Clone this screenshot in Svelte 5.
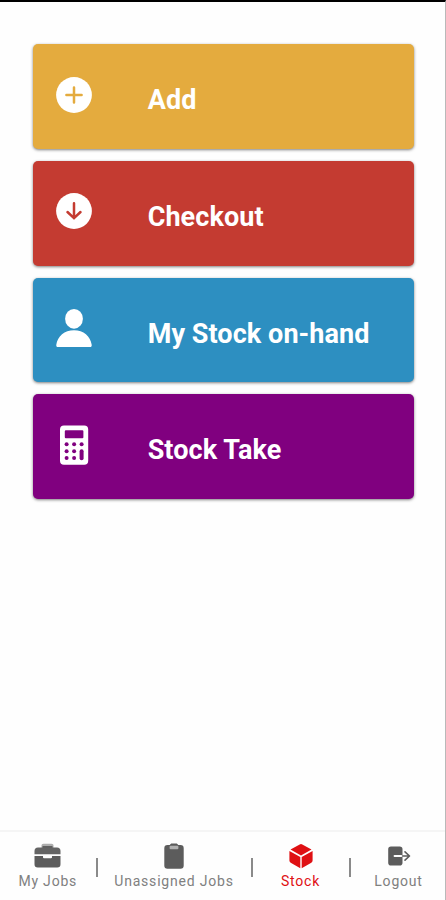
<script>
  const actions = [
    { label: 'Add', icon: 'add', color: '#e4ab3e' },
    { label: 'Checkout', icon: 'down', color: '#c43b31' },
    { label: 'My Stock on-hand', icon: 'person', color: '#2d8fc1' },
    { label: 'Stock Take', icon: 'calculator', color: '#80007f' }
  ];
  const tabs = [
    { label: 'My Jobs', icon: 'briefcase' },
    { label: 'Unassigned Jobs', icon: 'clipboard' },
    { label: 'Stock', icon: 'cube', active: true },
    { label: 'Logout', icon: 'logout' }
  ];
</script>

<div class="screen">
  <main>
    {#each actions as action}
      <button class="card" style="--tone: {action.color}">
        <svg class="card-icon" viewBox="0 0 36 36" width="36" height="36" fill="#fff">
          {#if action.icon === 'add'}
            <circle cx="18" cy="18" r="17.9" />
            <path d="M18 10.4v15.2M10.4 18h15.2" class="mark" />
          {:else if action.icon === 'down'}
            <circle cx="18" cy="18" r="17.9" />
            <path d="M18 10.200v15M11.500 19l6.500 6.200 6.500-6.200" class="mark" />
          {:else if action.icon === 'person'}
            <ellipse cx="18" cy="8.8" rx="8.9" ry="9.900" />
            <path d="M2 38.3C.7 38.3.1 37.400.3 36 1.500 27.500 8.500 21.500 18 21.500s16.500 6 17.700 14.500c.2 1.400-.4 2.300-1.700 2.300Z" transform="translate(0 -1.200)" />
          {:else}
            <path fill-rule="evenodd" d="M8-1.500h20.200a4 4 0 0 1 4 4v31.300a4 4 0 0 1-4 4H8a4 4 0 0 1-4-4V2.500a4 4 0 0 1 4-4ZM9.800 3.300a1 1 0 0 0-1 1v6a1 1 0 0 0 1 1h16.600a1 1 0 0 0 1-1v-6a1 1 0 0 0-1-1Z" />
            <g fill="var(--tone)">
              <circle cx="10.600" cy="17.300" r="2" /><circle cx="18.100" cy="17.300" r="2" /><circle cx="25.600" cy="17.300" r="2" />
              <circle cx="10.600" cy="24.200" r="2" /><circle cx="18.100" cy="24.200" r="2" />
              <circle cx="10.600" cy="31.100" r="2" /><circle cx="18.100" cy="31.100" r="2" />
              <rect x="23.600" y="22.200" width="4" height="11" rx="2" />
            </g>
          {/if}
        </svg>
        <span class="card-label">{action.label}</span>
      </button>
    {/each}
  </main>

  <nav>
    {#each tabs as tab, i}
      {#if i > 0}<i class="separator"></i>{/if}
      <a class="tab" class:active={tab.active} href="#{tab.icon}">
        <svg viewBox="0 0 28 28" width="28" height="28" fill="currentColor">
          {#if tab.icon === 'briefcase'}
            <path d="M7.500 6V3.800c0-1.300.7-2 2-2h8c1.300 0 2 .7 2 2V6Z" opacity=".5" />
            <path d="M4 5.500h4.500V4h10v1.500H23a3.500 3.500 0 0 1 3.500 3.500v3.200H.5V9A3.500 3.500 0 0 1 4 5.500Z" opacity=".95" />
            <path d="M.5 14H9v1.200a1 1 0 0 0 1 1h7a1 1 0 0 0 1-1V14h8.500v8.300a3.300 3.300 0 0 1-3.300 3.300H3.800A3.300 3.300 0 0 1 .5 22.300Z" />
          {:else if tab.icon === 'clipboard'}
            <path d="M7.500 3h2.300c.4-1.100 1.200-1.600 2.200-1.600h4c1 0 1.800.5 2.200 1.600h2.300A3.200 3.200 0 0 1 23.700 6.200v17.300a3.200 3.200 0 0 1-3.200 3.200h-13a3.200 3.200 0 0 1-3.200-3.200V6.200A3.200 3.200 0 0 1 7.500 3Z" />
            <rect x="9.600" y="3.700" width="8.800" height="3.600" rx="1" fill="#b0b0b0" />
          {:else if tab.icon === 'cube'}
            <path d="M3.500 7.600 12.700 2.400a2.600 2.600 0 0 1 2.600 0l9.200 5.200L14 13.600ZM2.400 8.900l10.900 6.200v11.200l-9.600-5.500a2.600 2.600 0 0 1-1.300-2.200ZM25.600 8.900v9.700a2.600 2.600 0 0 1-1.300 2.200l-9.600 5.500V15.100Z" />
          {:else}
            <path d="M6 4.400h8.700a2.800 2.800 0 0 1 2.800 2.800v5.900H9.500a.9.900 0 0 0 0 1.800h8v5.900a2.800 2.800 0 0 1-2.800 2.800H6a2.800 2.800 0 0 1-2.800-2.800V7.200A2.800 2.800 0 0 1 6 4.400Z" />
            <path d="M17.500 14h6.500M20 9.800l4.500 4.200-4.500 4.200" fill="none" stroke="currentColor" stroke-width="1.600" stroke-linecap="round" stroke-linejoin="round" />
          {/if}
        </svg>
        <span>{tab.label}</span>
      </a>
    {/each}
  </nav>
</div>

<style>
  :global(body) {
    margin: 0;
    background: #fff;
  }
  .screen {
    box-sizing: border-box;
    height: 900px;
    display: flex;
    flex-direction: column;
    border-top: 2px solid #000;
    border-right: 1px solid #b9b9b9;
    background: #fefefe;
    font-family: Roboto, sans-serif;
  }
  main {
    flex: 1;
    display: flex;
    flex-direction: column;
    gap: 12px;
    padding: 42.300px 31.500px 0 32.700px;
  }
  .card {
    box-sizing: border-box;
    height: 104.700px;
    display: flex;
    align-items: flex-start;
    padding: 0 0 0 23.300px;
    border: 0;
    border-radius: 5px;
    background: var(--tone);
    box-shadow: 0 1px 3px rgba(0, 0, 0, .5);
    color: #fff;
    font-family: inherit;
  }
  .card-icon {
    flex: none;
    margin-top: 32.400px;
    overflow: visible;
  }
  .mark {
    fill: none;
    stroke: var(--tone);
    stroke-width: 2.500;
    stroke-linecap: round;
    stroke-linejoin: round;
  }
  .card-label {
    margin: 39px 0 0 55.700px;
    font-size: 27px;
    line-height: 34px;
    font-weight: 700;
    letter-spacing: .07px;
    white-space: nowrap;
  }
  nav {
    box-sizing: border-box;
    height: 70px;
    display: grid;
    grid-template-columns: 95.500px 2px 153px 2px 96px 2px 1fr;
    border-top: 2px solid #f5f5f5;
  }
  .tab {
    display: flex;
    flex-direction: column;
    align-items: center;
    padding-top: 10px;
    color: #5c5c5c;
    text-decoration: none;
    font-size: 14px;
    line-height: 20px;
    letter-spacing: .8px;
    white-space: nowrap;
  }
  .tab:last-child {
    padding-left: 1.500px;
  }
  .tab span {
    color: #808080;
    margin-top: 1px;
  }
  .tab.active, .tab.active span {
    color: #df1013;
  }
  .separator {
    width: 2px;
    height: 19px;
    margin-top: 26px;
    background: #8a8a8a;
  }
</style>
